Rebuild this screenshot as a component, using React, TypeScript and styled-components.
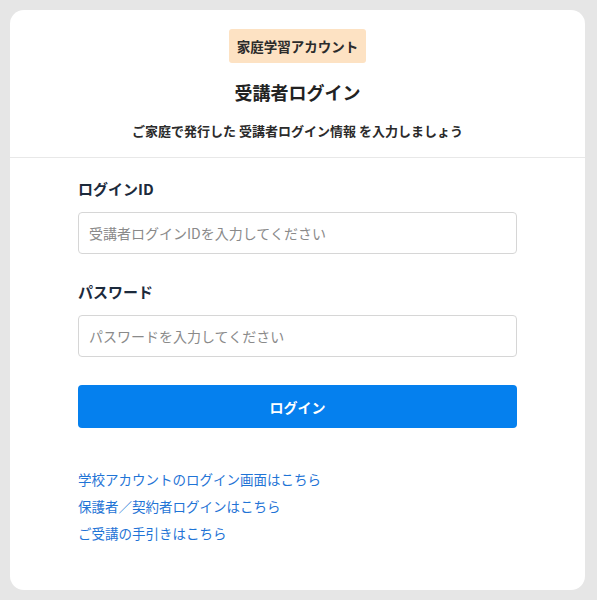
import React from 'react'
import styled, { createGlobalStyle } from 'styled-components'

const GlobalStyle = createGlobalStyle`
  html, body {
    margin: 0;
    padding: 0;
    background: #e6e6e6;
    font-family: "Noto Sans CJK JP", "Noto Sans", sans-serif;
  }
  * { box-sizing: border-box; }
`

const Page = styled.div`
  padding: 10px 12px 10px 10px;
  min-height: 600px;
`

const Card = styled.main`
  background: #fff;
  border-radius: 14px;
  height: 580px;
  overflow: hidden;
`

const Header = styled.header`
  display: flex;
  flex-direction: column;
  align-items: center;
  padding-top: 19px;
  border-bottom: 1px solid #e8e8e8;
  height: 148px;
`

const Badge = styled.div`
  background: #fde2c3;
  color: #2b2b2b;
  font-size: 13.5px;
  font-weight: 700;
  border-radius: 3px;
  height: 34px;
  padding: 0 8px;
  display: flex;
  align-items: center;
`

const Title = styled.h1`
  margin: 16px 0 0;
  font-size: 18px;
  font-weight: 700;
  color: #222;
  line-height: 26px;
`

const Lead = styled.p`
  margin: 17px 0 0;
  font-size: 13px;
  font-weight: 700;
  color: #2b2b2b;
  line-height: 18px;
`

const Form = styled.form`
  width: 439px;
  margin: 0 auto;
  padding-top: 21px;
  display: flex;
  flex-direction: column;
`

const Label = styled.label`
  font-size: 15px;
  font-weight: 700;
  color: #1c2a3c;
  line-height: 20px;
  margin-bottom: 13px;
`

const Input = styled.input<{ $gap?: number }>`
  height: 42px;
  border: 1px solid #d6d6d6;
  border-radius: 4px;
  padding: 0 10px;
  font-family: inherit;
  font-size: 14px;
  color: #333;
  margin-bottom: ${p => p.$gap ?? 0}px;
  &::placeholder {
    color: #8a8a8a;
  }
`

const Button = styled.button`
  height: 43px;
  margin-top: 28px;
  background: #0580ee;
  color: #fff;
  border: 0;
  border-radius: 4px;
  font-family: inherit;
  font-size: 14px;
  font-weight: 700;
`

const Links = styled.nav`
  margin-top: 38px;
  display: flex;
  flex-direction: column;
`

const LinkItem = styled.a`
  color: #1f74d6;
  font-size: 13.5px;
  line-height: 27px;
  text-decoration: none;
`

const App = () => {
  return (
    <>
      <GlobalStyle />
      <Page>
        <Card>
          <Header>
            <Badge>家庭学習アカウント</Badge>
            <Title>受講者ログイン</Title>
            <Lead>ご家庭で発行した 受講者ログイン情報 を入力しましょう</Lead>
          </Header>
          <Form onSubmit={e => e.preventDefault()}>
            <Label>ログインID</Label>
            <Input type="text" placeholder="受講者ログインIDを入力してください" $gap={28} />
            <Label>パスワード</Label>
            <Input type="password" placeholder="パスワードを入力してください" />
            <Button type="submit">ログイン</Button>
            <Links>
              <LinkItem href="#">学校アカウントのログイン画面はこちら</LinkItem>
              <LinkItem href="#">保護者／契約者ログインはこちら</LinkItem>
              <LinkItem href="#">ご受講の手引きはこちら</LinkItem>
            </Links>
          </Form>
        </Card>
      </Page>
    </>
  )
}

export default App
